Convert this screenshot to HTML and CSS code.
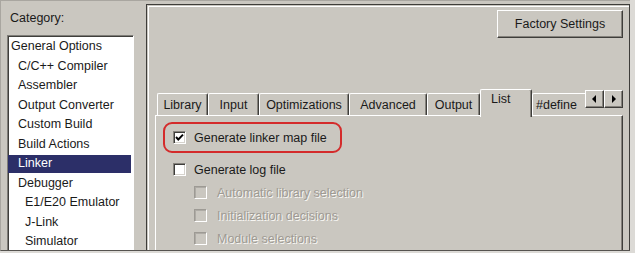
FILE: index.html
```html
<!DOCTYPE html>
<html lang="en">
<head>
  <meta charset="UTF-8">
  <title>Options - Linker</title>
  <link rel="stylesheet" href="styles.css">
</head>
<body>
  <div class="window">
    <!-- Category list -->
    <div class="sidebar">
      <div class="sidebar-label">Category:</div>
      <ul class="category-list">
        <li class="lvl0">General Options</li>
        <li class="lvl1">C/C++ Compiler</li>
        <li class="lvl1">Assembler</li>
        <li class="lvl1">Output Converter</li>
        <li class="lvl1">Custom Build</li>
        <li class="lvl1">Build Actions</li>
        <li class="lvl1 selected">Linker</li>
        <li class="lvl1">Debugger</li>
        <li class="lvl2">E1/E20 Emulator</li>
        <li class="lvl2">J-Link</li>
        <li class="lvl2">Simulator</li>
      </ul>
    </div>

    <!-- Options panel -->
    <div class="options">
      <div class="top-bar">
        <button class="factory-btn">Factory Settings</button>
      </div>

      <div class="tab-strip">
        <div class="tabs">
          <div class="tab">Library</div>
          <div class="tab">Input</div>
          <div class="tab">Optimizations</div>
          <div class="tab">Advanced</div>
          <div class="tab">Output</div>
          <div class="tab active">List</div>
          <div class="tab">#define</div>
        </div>
        <div class="tab-scroll">
          <button class="scroll-btn">
            <svg width="5" height="8" viewBox="0 0 5 8"><polygon points="4,0 0,4 4,8" fill="#000"/></svg>
          </button>
          <button class="scroll-btn">
            <svg width="5" height="8" viewBox="0 0 5 8"><polygon points="1,0 5,4 1,8" fill="#000"/></svg>
          </button>
        </div>
      </div>

      <div class="tab-page">
        <div class="check-row marked">
          <span class="check-box">
            <svg width="11" height="11" viewBox="0 0 11 11"><path d="M2 5 L4.3 7.5 L9 2.6" fill="none" stroke="#000" stroke-width="1.9"/></svg>
          </span>
          <span>Generate linker map file</span>
        </div>
        <div class="check-row top">
          <span class="check-box"></span>
          <span>Generate log file</span>
        </div>
        <div class="check-row sub disabled">
          <span class="check-box"></span>
          <span>Automatic library selection</span>
        </div>
        <div class="check-row sub disabled">
          <span class="check-box"></span>
          <span>Initialization decisions</span>
        </div>
        <div class="check-row sub disabled">
          <span class="check-box"></span>
          <span>Module selections</span>
        </div>
      </div>
    </div>
  </div>
</body>
</html>
```

FILE: styles.css
```css
* {
  box-sizing: border-box;
}
body {
  margin: 0;
  background: #dcdad6;
  font-family: "Liberation Sans", Arial, sans-serif;
  font-size: 12.5px;
  color: #1a1a1a;
}
.window {
  width: 630px;
  height: 251px;
  display: flex;
  background: #cac7c0;
  border-top: 1px solid #a9a6a0;
  border-left: 1px solid #a9a6a0;
  border-bottom: 1px solid #55534f;
  overflow: hidden;
}

/* left column */
.sidebar {
  width: 145px;
  flex-shrink: 0;
  padding-left: 6px;
}
.sidebar-label {
  margin: 10px 0 0 3px;
  line-height: 15px;
}
.category-list {
  list-style: none;
  margin: 9px 0 0;
  padding: 1px 0 0;
  width: 127px;
  height: 240px;
  background: #fff;
  border: 1px solid;
  border-color: #7f7d78 #fff #fff #7f7d78;
  box-shadow: inset 1px 1px 0 #3f3e3b;
}
.category-list li {
  padding: 1px 0;
  margin-right: 2px;
  line-height: 17.5px;
  background-clip: content-box;
  white-space: nowrap;
}
.category-list .lvl0 {
  text-indent: 3px;
}
.category-list .lvl1 {
  text-indent: 10px;
}
.category-list .lvl2 {
  text-indent: 17px;
}
.category-list li.selected {
  background-color: #2c2f68;
  color: #fff;
}

/* right panel */
.options {
  flex: 1;
  margin-top: 3px;
  border: 1px solid #3e3d3a;
  border-bottom: 0;
  box-shadow: inset 1px 1px 0 #cac7c0, inset 2px 2px 0 #fff;
  padding: 5px 6px 0 8px;
  display: flex;
  flex-direction: column;
  overflow: hidden;
}
.top-bar {
  display: flex;
  justify-content: flex-end;
}
.factory-btn {
  width: 126px;
  height: 28px;
  padding: 0;
  font: inherit;
  color: #1a1a1a;
  background: #cac7c0;
  border: 1px solid;
  border-color: #fff #3e3d3a #3e3d3a #fff;
  box-shadow: inset -1px -1px 0 #85827c;
}

.tab-strip {
  display: flex;
  align-items: flex-end;
  height: 26px;
  margin-top: 51px;
}
.tabs {
  flex: 1;
  display: flex;
  align-items: flex-end;
  height: 28px;
  margin-bottom: -2px;
  padding-left: 2px;
  overflow: hidden;
  position: relative;
  z-index: 1;
}
.tab {
  flex-shrink: 0;
  height: 22px;
  margin-bottom: 2px;
  line-height: 22px;
  text-align: center;
  white-space: nowrap;
  background: #cac7c0;
  border-top: 1px solid #fff;
  border-left: 1px solid #fff;
  border-right: 1px solid #3e3d3a;
  border-radius: 2px 2px 0 0;
  box-shadow: inset -1px 0 0 #85827c;
}
.tab:nth-child(1) { width: 51px; }
.tab:nth-child(2) { width: 51px; }
.tab:nth-child(3) { width: 90px; }
.tab:nth-child(4) { width: 78px; }
.tab:nth-child(5) { width: 53px; }
.tab:nth-child(6) { width: 52px; }
.tab:nth-child(7) { width: 72px; text-align: left; padding-left: 3px; }
.tab.active {
  height: 28px;
  margin-bottom: 0;
  padding: 2px 0 0 10px;
  line-height: 15px;
  text-align: left;
}

.tab-scroll {
  display: flex;
  margin-bottom: 7px;
}
.scroll-btn {
  width: 19px;
  height: 18px;
  padding: 0;
  display: flex;
  align-items: center;
  justify-content: center;
  background: #cac7c0;
  border: 1px solid;
  border-color: #fff #3e3d3a #3e3d3a #fff;
  box-shadow: inset -1px -1px 0 #85827c;
}

.tab-page {
  flex: 1;
  border: 1px solid;
  border-color: #fff #3e3d3a #3e3d3a #fff;
  box-shadow: inset -1px 0 0 #85827c;
  padding: 6px 0 0 7px;
}
.check-row {
  display: flex;
  align-items: center;
  height: 23px;
  white-space: nowrap;
}
.check-row.marked {
  width: 179px;
  height: 31px;
  margin-bottom: 5px;
  padding-left: 8px;
  border: 2px solid #d42b2b;
  border-radius: 9px;
}
.check-row.top {
  margin-left: 10px;
}
.check-row.sub {
  margin-left: 31px;
}
.check-box {
  width: 13px;
  height: 13px;
  margin-right: 8px;
  flex-shrink: 0;
  background: #fff;
  border: 1px solid;
  border-color: #85827c #fff #fff #85827c;
  box-shadow: inset 1px 1px 0 #3e3d3a, inset -1px -1px 0 #d6d3cd;
}
.check-box svg {
  display: block;
}
.disabled {
  color: #9e9a93;
  text-shadow: 1px 1px 0 #f7f6f3;
}
.disabled .check-box {
  margin-right: 10px;
  background: #cac7c0;
  border-color: #9d9a94 #fff #fff #9d9a94;
  box-shadow: inset 1px 1px 0 #aeaba5;
}
```
